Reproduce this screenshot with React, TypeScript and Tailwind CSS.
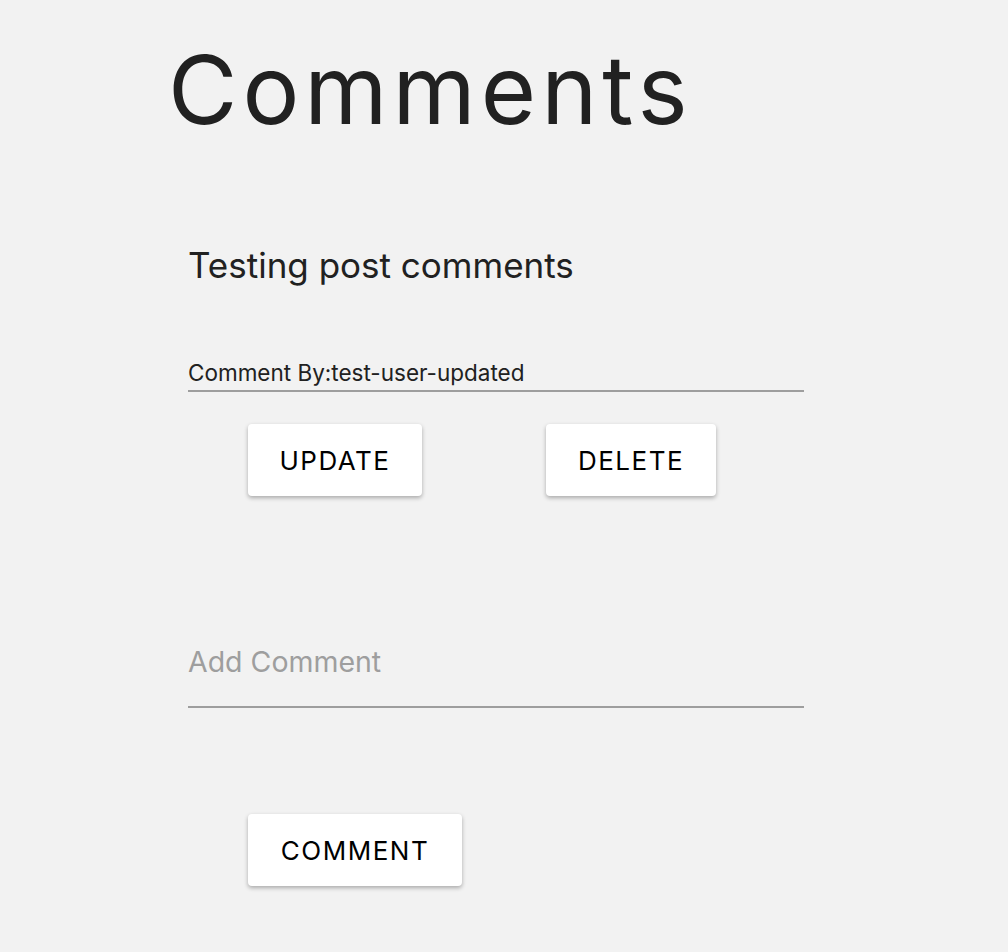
import React, { useState } from 'react';

export default function App() {
  const [text, setText] = useState('');

  return (
    <div className="min-h-screen w-full bg-[#f2f2f2] font-['Inter',sans-serif] text-[#212121]">
      <div className="pl-[168px] pt-[42px]">
        <h1 className="text-[95px] leading-[95px] font-normal tracking-[5px]">Comments</h1>
      </div>

      <div className="ml-[188px] w-[616px] pt-[111px]">
        <h2 className="text-[35px] leading-[35px]">Testing post comments</h2>

        <div className="mt-[76px] border-b-2 border-[#9e9e9e] pb-[3px]">
          <p className="text-[22.5px] leading-[28px]">Comment By:test-user-updated</p>
        </div>

        <div className="mt-[32px] ml-[60px] flex gap-[124px]">
          <button className="h-[72px] w-[174px] rounded bg-white text-[26px] tracking-[1.5px] text-black shadow-[0_2px_4px_rgba(0,0,0,0.3)]">
            UPDATE
          </button>
          <button className="h-[72px] w-[170px] rounded bg-white text-[26px] tracking-[1.5px] text-black shadow-[0_2px_4px_rgba(0,0,0,0.3)]">
            DELETE
          </button>
        </div>

        <div className="mt-[149px] border-b-2 border-[#9e9e9e]">
          <input
            value={text}
            onChange={(e) => setText(e.target.value)}
            placeholder="Add Comment"
            className="w-full bg-transparent pb-[27px] text-[28.5px] leading-[34px] outline-none placeholder:text-[#9e9e9e]"
          />
        </div>

        <button className="mt-[106px] ml-[60px] h-[72px] w-[214px] rounded bg-white text-[26px] tracking-[1.5px] text-black shadow-[0_2px_4px_rgba(0,0,0,0.3)]">
          COMMENT
        </button>
      </div>
    </div>
  );
}
